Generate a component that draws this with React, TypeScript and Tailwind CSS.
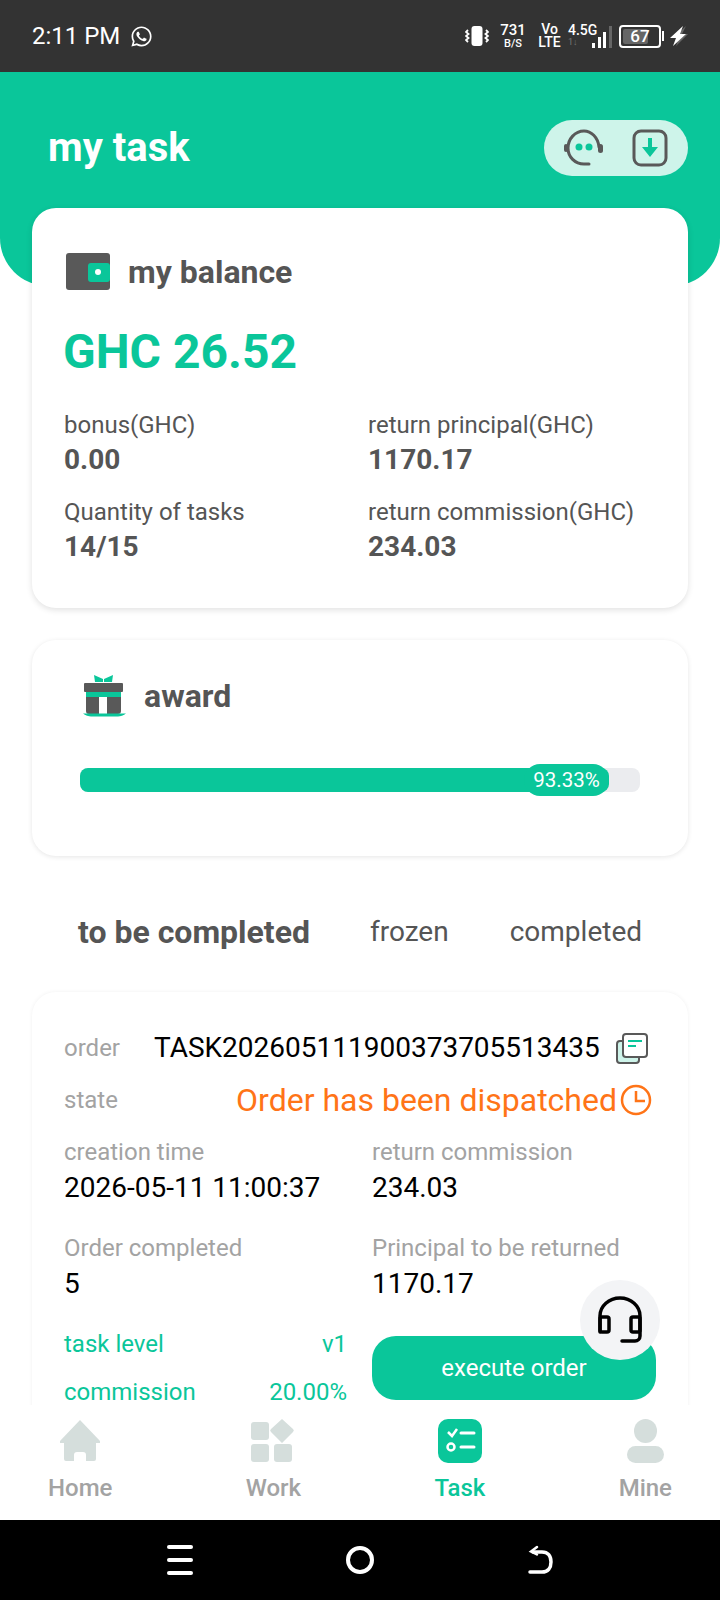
import { FaWhatsapp } from 'react-icons/fa';

function StatusBar() {
  return (
    <div className="h-[72px] shrink-0 bg-[#333333] flex items-center pl-8 pr-8 text-white">
      <span className="text-[24px] leading-none">2:11 PM</span>
      <FaWhatsapp className="ml-[10px] text-[23px]" />
      <div className="ml-auto flex items-center">
        <svg width="24" height="22" viewBox="0 0 24 22" fill="none">
          <rect x="6.500" y="1" width="11" height="20" rx="3" fill="#fff" />
          <path d="M3 5L1 7l2.500 2L1 11l2.500 2L1 15l2 2M21 5l2 2-2.500 2 2.500 2-2.500 2 2.500 2-2 2" stroke="#fff" strokeWidth="1.800" />
        </svg>
        <div className="ml-3 flex flex-col items-center font-medium w-6">
          <span className="text-[15px] leading-[15px]">731</span>
          <span className="text-[11px] leading-[11px]">B/S</span>
        </div>
        <div className="ml-[14px] flex flex-col items-center font-medium w-[21px]">
          <span className="text-[14px] leading-[13px]">Vo</span>
          <span className="text-[14px] leading-[13px]">LTE</span>
        </div>
        <div className="ml-2 flex flex-col w-[30px] self-start">
          <span className="text-[14px] leading-[14px] font-medium">4.5G</span>
          <span className="text-[9px] leading-[10px] text-[#777]">1↓</span>
        </div>
        <svg className="-ml-[6px] mt-[1px]" width="21" height="22" viewBox="0 0 21 22">
          <rect x="0" y="17" width="3" height="5" fill="#fff" />
          <rect x="6" y="11" width="3" height="11" fill="#fff" />
          <rect x="11" y="6" width="3" height="16" fill="#fff" />
          <rect x="17" y="0" width="3" height="22" fill="#666" />
        </svg>
        <div className="ml-[6px] w-[42px] h-[23px] rounded-[4px] border-2 border-white p-[2px] relative flex items-center">
          <div className="h-full w-[25px] bg-[#666] rounded-[2px]" />
          <span className="absolute inset-0 flex items-center justify-center text-[17px] font-medium leading-none">67</span>
        </div>
        <div className="ml-[1px] w-[2px] h-[10px] bg-white" />
        <svg className="ml-[6px]" width="18" height="22" viewBox="0 0 18 22">
          <path d="M16 1L4 12h5l-3 9 12-12h-6z" fill="#666" />
          <path d="M13 1L0 13h6l-3 8 13-12h-6l3-8z" fill="#fff" />
        </svg>
      </div>
    </div>
  );
}

function WalletIcon() {
  return (
    <svg width="44" height="38" viewBox="0 0 44 38">
      <rect x="0" y="0" width="44" height="37" rx="3" fill="#595959" />
      <rect x="22" y="10" width="22" height="19" rx="3" fill="#0ac69a" />
      <circle cx="32" cy="19" r="3" fill="#fff" />
    </svg>
  );
}

function GiftIcon() {
  return (
    <svg width="43" height="42" viewBox="0 0 43 42">
      <path d="M11 0l9 4v3h-8zM30 0l-9 4v3h8z" fill="#0ac69a" />
      <rect x="1" y="8" width="39" height="9" rx="1" fill="#595959" />
      <rect x="3" y="17" width="35" height="5" fill="#0ac69a" />
      <path d="M3 22h13v17H6a3 3 0 0 1-3-3zM24 22h14v14a3 3 0 0 1-3 3H24z" fill="#595959" />
      <path d="M0 38.500h43c-2 2-6 3-8 3H8c-2 0-6-1-8-3z" fill="#0ac69a" />
    </svg>
  );
}

function Stat({ label, value }: { label: string; value: string }) {
  return (
    <div>
      <div className="text-[24px] leading-[32px] text-[#555]">{label}</div>
      <div className="text-[28px] leading-[38px] font-bold text-[#555]">{value}</div>
    </div>
  );
}

function Field({ label, value }: { label: string; value: string }) {
  return (
    <div className="h-[96px]">
      <div className="text-[24px] leading-[32px] text-[#a3a3a3]">{label}</div>
      <div className="text-[28px] leading-[40px] text-black">{value}</div>
    </div>
  );
}

function NavItem({ label, active, children }: { label: string; active?: boolean; children: React.ReactNode }) {
  return (
    <div className="flex flex-col items-center">
      <div className="h-[46px] flex items-center justify-center">{children}</div>
      <span className={active ? 'mt-[8px] text-[24px] leading-[32px] font-medium text-[#0ac69a]' : 'mt-[8px] text-[24px] leading-[32px] font-medium text-[#a3a3a3]'}>
        {label}
      </span>
    </div>
  );
}

export default function App() {
  return (
    <div className="w-[720px] h-[1600px] relative overflow-hidden flex flex-col bg-white font-['Roboto',sans-serif]">
      <StatusBar />

      <main className="flex-1 overflow-hidden">
        {/* green header, the balance card overlaps its lower edge */}
        <div className="h-[214px] bg-[#0ac69a] rounded-b-[48px] flex items-start justify-between pl-12 pr-8 pt-[48px]">
          <h1 className="mt-[3px] text-[40px] leading-[50px] font-bold text-white">my task</h1>
          <div className="w-[144px] h-[56px] rounded-full bg-[#cef4ea] flex items-center pl-5 gap-7">
            <svg width="40" height="38" viewBox="0 0 40 38" fill="none">
              <path d="M35 18C34 8 27 2 20 2 11 2 4 10 4 19c0 9 7 16 16 16h5" stroke="#595959" strokeWidth="3" strokeLinecap="round" />
              <rect x="0" y="15" width="4" height="8" rx="2" fill="#595959" />
              <rect x="34" y="15" width="5" height="9" rx="2.500" fill="#595959" />
              <circle cx="15" cy="18" r="3.500" fill="#0ac69a" />
              <circle cx="25" cy="18" r="3.500" fill="#0ac69a" />
            </svg>
            <svg width="36" height="38" viewBox="0 0 36 38" fill="none">
              <rect x="2" y="2" width="32" height="34" rx="7" stroke="#595959" strokeWidth="3" />
              <path d="M16 9h4v9h6L18 28 10 18h6z" fill="#0ac69a" />
            </svg>
          </div>
        </div>

        <section className="relative mx-8 -mt-[78px] h-[400px] rounded-3xl bg-white shadow-[0_2px_6px_rgba(0,0,0,0.12)] px-8 pt-[45px]">
          <div className="flex items-center gap-[18px] pl-[2px] h-[38px]">
            <WalletIcon />
            <span className="text-[32px] leading-[38px] font-bold text-[#555]">my balance</span>
          </div>
          <div className="mt-[33px] -ml-[1px] text-[48px] leading-[56px] font-bold text-[#0ac69a]">GHC 26.52</div>
          <div className="mt-[29px] grid grid-cols-[304px_1fr] gap-y-[17px]">
            <Stat label="bonus(GHC)" value="0.00" />
            <Stat label="return principal(GHC)" value="1170.17" />
            <Stat label="Quantity of tasks" value="14/15" />
            <Stat label="return commission(GHC)" value="234.03" />
          </div>
        </section>

        <section className="mx-8 mt-8 h-[216px] rounded-3xl bg-white shadow-[0_1px_5px_rgba(0,0,0,0.1)] pt-[35px] px-12">
          <div className="flex items-center gap-[18px] pl-[3px] h-[42px]">
            <GiftIcon />
            <span className="text-[32px] leading-[38px] font-bold text-[#555]">award</span>
          </div>
          <div className="mt-[51px] h-6 rounded-lg bg-[#ebecef]">
            <div className="relative h-6 w-[529px] rounded-lg bg-[#0ac69a]">
              <span className="absolute right-0 -top-1 h-8 w-[85px] rounded-2xl bg-[#0ac69a] flex items-center justify-center text-[20.5px] text-white">
                93.33%
              </span>
            </div>
          </div>
        </section>

        <nav className="h-[136px] flex items-center pl-[78px] pt-4">
          <span className="text-[32px] font-bold text-[#555]">to be completed</span>
          <span className="ml-[60px] text-[28px] text-[#555]">frozen</span>
          <span className="ml-[61px] text-[28px] text-[#555]">completed</span>
        </nav>

        <section className="mx-8 rounded-3xl bg-white shadow-[0_0_4px_rgba(0,0,0,0.06)] px-8 pt-[36px] h-[500px]">
          <div className="flex items-center h-[40px]">
            <span className="w-[90px] text-[24px] text-[#a3a3a3]">order</span>
            <span className="text-[28px] text-black">TASK202605111900373705513435</span>
            <svg className="ml-[16px]" width="32" height="31" viewBox="0 0 32 31" fill="none">
              <rect x="1" y="8" width="22" height="22" rx="3" fill="#cef4ea" stroke="#595959" strokeWidth="2" />
              <rect x="7" y="1" width="24" height="23" rx="3" fill="#fff" stroke="#595959" strokeWidth="2" />
              <path d="M12 8h14" stroke="#0ac69a" strokeWidth="2" />
              <path d="M12 13h8" stroke="#0ac69a" strokeWidth="2" />
            </svg>
          </div>
          <div className="mt-[12px] flex items-center h-[40px] pr-1">
            <span className="text-[24px] text-[#a3a3a3]">state</span>
            <span className="ml-auto text-[32px] text-[#ff7417]">Order has been dispatched</span>
            <svg className="ml-[3px]" width="32" height="32" viewBox="0 0 32 32" fill="none" stroke="#ff7417" strokeWidth="2.500">
              <circle cx="16" cy="16" r="14" />
              <path d="M16 7v10h9" />
            </svg>
          </div>
          <div className="mt-[16px] grid grid-cols-[308px_1fr]">
            <Field label="creation time" value="2026-05-11 11:00:37" />
            <Field label="return commission" value="234.03" />
            <Field label="Order completed" value="5" />
            <Field label="Principal to be returned" value="1170.17" />
          </div>
          <div className="grid grid-cols-[283px_284px] gap-x-[25px]">
            <div className="text-[24px] text-[#0ac69a]">
              <div className="flex justify-between leading-[32px]">
                <span>task level</span>
                <span>v1</span>
              </div>
              <div className="flex justify-between leading-[32px] mt-4">
                <span>commission</span>
                <span>20.00%</span>
              </div>
            </div>
            <button className="mt-[8px] h-16 rounded-3xl bg-[#0ac69a] text-[24px] text-white">execute order</button>
          </div>
        </section>
      </main>

      <footer className="relative z-10 h-[115px] shrink-0 bg-white flex justify-between px-12 pt-[13px]">
        <NavItem label="Home">
          <svg width="42" height="42" viewBox="0 0 42 42">
            <path d="M21 0L41 21v2h-4v16a2 2 0 0 1-2 2h-8v-6a3 3 0 0 0-3-3h-6a3 3 0 0 0-3 3v6H7a2 2 0 0 1-2-2V23H1v-2z" fill="#d5dedc" />
          </svg>
        </NavItem>
        <NavItem label="Work">
          <svg width="44" height="44" viewBox="0 0 44 44" fill="#d5dedc">
            <rect x="0" y="3" width="18" height="18" rx="3" />
            <path d="M31 0l11 10a2 2 0 0 1 0 3L31 24 20 13a2 2 0 0 1 0-3z" />
            <rect x="0" y="25" width="18" height="18" rx="3" />
            <rect x="23" y="25" width="18" height="18" rx="3" />
          </svg>
        </NavItem>
        <NavItem label="Task" active>
          <svg width="44" height="44" viewBox="0 0 44 44" fill="none">
            <rect width="44" height="44" rx="10" fill="#0ac69a" />
            <path d="M10 13l4 4 5-7" stroke="#fff" strokeWidth="2.500" />
            <path d="M23 14h13M23 28h13" stroke="#fff" strokeWidth="3" strokeLinecap="round" />
            <circle cx="13" cy="28" r="3.500" stroke="#fff" strokeWidth="2.500" />
          </svg>
        </NavItem>
        <NavItem label="Mine">
          <svg width="37" height="44" viewBox="0 0 37 44" fill="#d5dedc">
            <ellipse cx="18.500" cy="12" rx="11.500" ry="12" />
            <rect x="0" y="27" width="37" height="17" rx="8.500" />
          </svg>
        </NavItem>
      </footer>

      {/* android navigation keys */}
      <div className="h-[80px] shrink-0 bg-black flex items-center justify-center">
        <div className="w-[26px] flex flex-col gap-[9px] ml-[2px]">
          <div className="h-1 rounded-full bg-white" />
          <div className="h-1 rounded-full bg-white" />
          <div className="h-1 rounded-full bg-white" />
        </div>
        <div className="ml-[153px] w-[28px] h-[28px] rounded-full border-[4px] border-white" />
        <svg className="ml-[153px]" width="28" height="30" viewBox="0 0 28 30" fill="none" stroke="#fff" strokeLinecap="round">
          <path d="M6 7h9c6 0 9 4 9 10s-3 10-9 10H3" strokeWidth="3.500" />
          <path d="M10 2L4 6.500l6 3" strokeWidth="2.500" />
        </svg>
      </div>

      {/* floating support button */}
      <button className="absolute left-[580px] top-[1280px] z-20 w-20 h-20 rounded-full bg-[#f3f4f6] flex items-center justify-center">
        <svg width="44" height="48" viewBox="0 0 44 48" fill="none" stroke="#000" strokeWidth="3.500" strokeLinecap="round">
          <path d="M2 36V20a20 18 0 0 1 40 0v20a5 5 0 0 1-5 5H24" />
          <rect x="2" y="21" width="9" height="15" rx="2" />
          <rect x="33" y="21" width="9" height="15" rx="2" />
        </svg>
      </button>
    </div>
  );
}
